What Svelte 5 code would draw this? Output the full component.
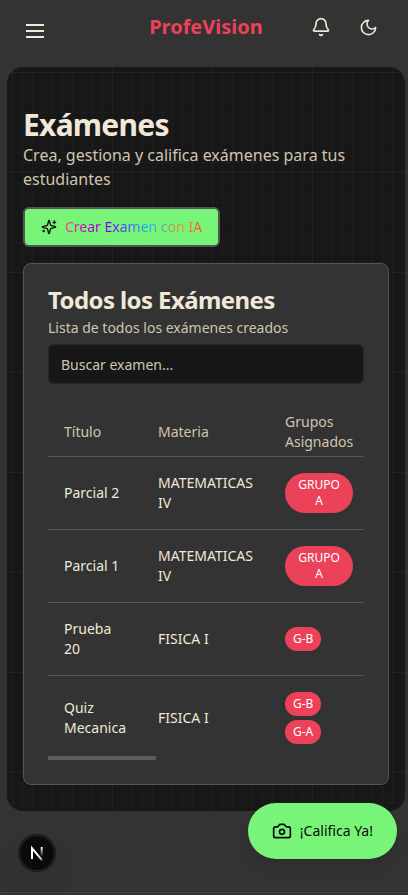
<script>
	const exams = [
		{ title: 'Parcial 2', subject: 'MATEMATICAS IV', groups: ['GRUPO A'] },
		{ title: 'Parcial 1', subject: 'MATEMATICAS IV', groups: ['GRUPO A'] },
		{ title: 'Prueba 20', subject: 'FISICA I', groups: ['G-B'] },
		{ title: 'Quiz Mecanica', subject: 'FISICA I', groups: ['G-B', 'G-A'] }
	];

	let search = $state('');
	let visible = $derived(
		exams.filter((e) => e.title.toLowerCase().includes(search.toLowerCase()))
	);
</script>

<div class="page">
	<header>
		<button class="icon-btn menu" aria-label="Menú">
			<span></span>
			<span></span>
			<span></span>
		</button>
		<div class="brand">ProfeVision</div>
		<div class="actions">
			<button class="icon-btn" aria-label="Notificaciones">
				<svg class="icon" width="20" height="20" viewBox="0 0 24 24">
					<path d="M10.268 21a2 2 0 0 0 3.464 0" />
					<path d="M3.262 15.326A1 1 0 0 0 4 17h16a1 1 0 0 0 .74-1.673C19.41 13.956 18 12.499 18 8A6 6 0 0 0 6 8c0 4.499-1.411 5.956-2.738 7.326" />
				</svg>
			</button>
			<button class="icon-btn" aria-label="Tema">
				<svg class="icon" width="19" height="19" viewBox="0 0 24 24">
					<path d="M12 3a6 6 0 0 0 9 9 9 9 0 1 1-9-9Z" />
				</svg>
			</button>
		</div>
	</header>

	<main>
		<h1>Exámenes</h1>
		<p class="lead">Crea, gestiona y califica exámenes para tus estudiantes</p>

		<button class="create">
			<svg class="icon" width="16" height="16" viewBox="0 0 24 24">
				<path d="M9.937 15.5A2 2 0 0 0 8.5 14.063l-6.135-1.582a.5.5 0 0 1 0-.962L8.5 9.936A2 2 0 0 0 9.937 8.5l1.582-6.135a.5.5 0 0 1 .963 0L14.063 8.5A2 2 0 0 0 15.5 9.937l6.135 1.581a.5.5 0 0 1 0 .964L15.5 14.063a2 2 0 0 0-1.437 1.437l-1.582 6.135a.5.5 0 0 1-.963 0z" />
				<path d="M20 3v4M22 5h-4M4 17v2M5 18H3" />
			</svg>
			<span>Crear Examen con IA</span>
		</button>

		<section class="card">
			<h2>Todos los Exámenes</h2>
			<p class="desc">Lista de todos los exámenes creados</p>
			<input type="text" placeholder="Buscar examen..." bind:value={search} />

			<div class="table-wrap">
				<table>
					<thead>
						<tr>
							<th class="col-title">Título</th>
							<th class="col-subject">Materia</th>
							<th class="col-groups">Grupos Asignados</th>
						</tr>
					</thead>
					<tbody>
						{#each visible as exam}
							<tr>
								<td>{exam.title}</td>
								<td>{exam.subject}</td>
								<td>
									<div class="groups">
										{#each exam.groups as group}
											<span class="badge">{group}</span>
										{/each}
									</div>
								</td>
							</tr>
						{/each}
					</tbody>
				</table>
				<div class="scroll-thumb"></div>
			</div>
		</section>
	</main>

	<footer></footer>

	<button class="grade">
		<svg class="icon" width="20" height="20" viewBox="0 0 24 24">
			<path d="M14.5 4h-5L7 7H4a2 2 0 0 0-2 2v9a2 2 0 0 0 2 2h16a2 2 0 0 0 2-2V9a2 2 0 0 0-2-2h-3l-2.5-3z" />
			<circle cx="12" cy="13" r="3" />
		</svg>
		¡Califica Ya!
	</button>

	<div class="dev-badge">
		<svg width="36" height="36" viewBox="0 0 36 36" fill="none">
			<defs>
				<linearGradient id="diag" x1="19" y1="19" x2="24.5" y2="25.5" gradientUnits="userSpaceOnUse">
					<stop stop-color="#fff" />
					<stop offset="0.6" stop-color="#fff" stop-opacity="0.8" />
					<stop offset="1" stop-color="#fff" stop-opacity="0" />
				</linearGradient>
				<linearGradient id="stem" x1="0" y1="12" x2="0" y2="22" gradientUnits="userSpaceOnUse">
					<stop stop-color="#fff" />
					<stop offset="1" stop-color="#fff" stop-opacity="0" />
				</linearGradient>
			</defs>
			<path d="M13 24V13.2L23.4 25.6" stroke="url(#diag)" stroke-width="2" />
			<path d="M22.7 12v10" stroke="url(#stem)" stroke-width="2" />
		</svg>
	</div>
</div>

<style>
	:global(body) {
		background: #333;
	}

	.page {
		position: relative;
		box-sizing: border-box;
		height: 895px;
		overflow: hidden;
		font-family: 'Noto Sans', sans-serif;
		font-size: 14px;
		line-height: 20px;
		color: #f0e8d8;
	}
	.page *,
	.page *::before {
		box-sizing: border-box;
	}

	button {
		font: inherit;
		border: 0;
		padding: 0;
		cursor: pointer;
	}
	h1, h2, p {
		margin: 0;
	}

	.icon {
		fill: none;
		stroke: currentColor;
		stroke-width: 2;
		stroke-linecap: round;
		stroke-linejoin: round;
		flex-shrink: 0;
	}

	header {
		display: grid;
		grid-template-columns: 1fr auto 1fr;
		align-items: center;
		height: 67px;
		padding: 0 18px 13px 26px;
	}
	.icon-btn {
		display: flex;
		align-items: center;
		justify-content: center;
		width: 40px;
		height: 40px;
		background: none;
		color: #f0e8d8;
	}
	.menu {
		flex-direction: column;
		gap: 4px;
		width: 18px;
		margin-top: 8px;
	}
	.menu span {
		width: 18px;
		height: 2px;
		background: #f0e8d8;
	}
	.brand {
		margin: 0 2px 0 -2px;
		font-size: 20px;
		font-weight: 700;
		line-height: 28px;
		color: #eb4259;
	}
	.actions {
		display: flex;
		justify-content: flex-end;
		gap: 7px;
		padding-right: 2px;
	}

	main {
		height: 744px;
		margin: 0 3px 0 7px;
		padding: 40px 16px 26px;
		border-radius: 16px;
		background-color: #171717;
		/* major lines every 100px, minor every 10px */
		background-image:
			linear-gradient(rgba(255, 255, 255, 0.025) 1px, transparent 1px),
			linear-gradient(90deg, rgba(255, 255, 255, 0.025) 1px, transparent 1px),
			linear-gradient(rgba(255, 255, 255, 0.022) 1px, transparent 1px),
			linear-gradient(90deg, rgba(255, 255, 255, 0.022) 1px, transparent 1px);
		background-size: 100px 100px, 100px 100px, 10px 10px, 10px 10px;
		background-position: 5px 5px;
	}

	h1 {
		font-size: 30px;
		line-height: 36px;
		font-weight: 700;
		letter-spacing: -0.75px;
	}
	.lead {
		font-size: 16px;
		line-height: 24px;
		color: #d0c5b0;
	}

	.create {
		display: flex;
		align-items: center;
		gap: 8px;
		height: 40px;
		margin-top: 16px;
		padding: 0 16px;
		border: 2px solid #555;
		border-radius: 6px;
		background: #78f578;
		color: #0a0a0a;
	}
	.create span {
		background: linear-gradient(90deg, #ff4593 0%, #c800c0 16%, #8000ff 33%, #12b5f8 61%, #ff8c20 87%, #ff4b2b 100%);
		-webkit-background-clip: text;
		background-clip: text;
		color: transparent;
	}

	.card {
		height: 522px;
		margin-top: 16px;
		padding: 24px;
		border: 1px solid #555;
		border-radius: 8px;
		background: #333;
	}
	h2 {
		font-size: 24px;
		line-height: 24px;
		font-weight: 700;
		letter-spacing: -0.6px;
	}
	.desc {
		margin-top: 6px;
		color: #d0c5b0;
	}
	input {
		display: block;
		width: 100%;
		height: 40px;
		margin-top: 6px;
		padding: 0 12px;
		border: 1px solid #272727;
		border-radius: 6px;
		background: #171717;
		color: #f0e8d8;
		font: inherit;
	}
	input::placeholder {
		color: #d0c5b0;
		opacity: 1;
	}

	.table-wrap {
		position: relative;
		height: 376px;
		overflow: hidden;
	}
	table {
		width: 321px;
		margin-top: 24px;
		border-collapse: separate;
		border-spacing: 0;
		table-layout: fixed;
	}
	.col-title { width: 94px; }
	.col-subject { width: 127px; }
	.col-groups { width: 100px; }
	th {
		height: 49px;
		padding: 0 16px;
		border-bottom: 1px solid #555;
		text-align: left;
		font-weight: 400;
		color: #d0c5b0;
	}
	td {
		padding: 16px;
		border-bottom: 1px solid #555;
		vertical-align: middle;
	}
	tbody tr {
		height: 73px;
	}
	tbody tr:last-child td {
		border-bottom: 0;
	}

	.groups {
		display: flex;
		flex-wrap: wrap;
		gap: 4px;
	}
	.badge {
		padding: 4px 8px;
		border-radius: 20px;
		background: #eb4259;
		color: #fff;
		font-size: 12px;
		line-height: 16px;
		text-align: center;
	}

	.scroll-thumb {
		position: absolute;
		left: 0;
		bottom: 0;
		width: 108px;
		height: 4px;
		background: #5c5c5c;
	}

	footer {
		height: 84px;
		margin-top: 81px;
		border-top: 1px solid #404040;
	}

	.grade {
		position: absolute;
		right: 11px;
		bottom: 36px;
		display: flex;
		align-items: center;
		gap: 8px;
		height: 56px;
		padding: 0 24px;
		border-radius: 28px;
		background: #78f578;
		color: #0a0a0a;
		box-shadow: 0 10px 15px -3px rgba(0, 0, 0, 0.1), 0 4px 6px -4px rgba(0, 0, 0, 0.1);
	}

	.dev-badge {
		position: absolute;
		left: 19px;
		bottom: 24px;
		display: flex;
		width: 36px;
		height: 36px;
		border-radius: 50%;
		background: #0a0a0a;
		box-shadow: inset 0 0 0 1px #292929, 0 0 0 1px #171717, 0 16px 32px -8px rgba(0, 0, 0, 0.24);
	}
</style>
